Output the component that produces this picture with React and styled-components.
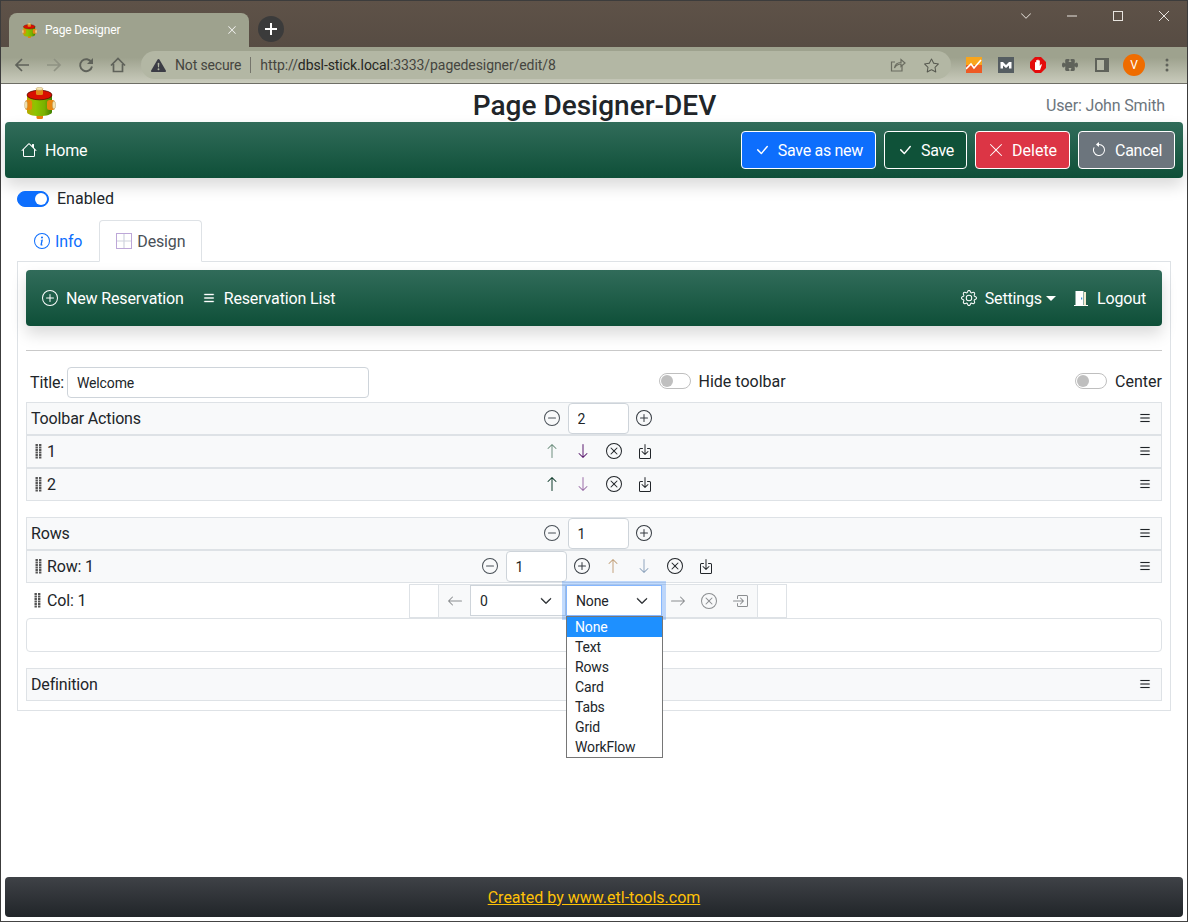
import React from "react";
import styled, { createGlobalStyle } from "styled-components";
import {
  BsHouse, BsCheckLg, BsXLg, BsArrowCounterclockwise, BsInfoCircle,
  BsPlusCircle, BsDashCircle, BsList, BsGear, BsArrowUp, BsArrowDown,
  BsArrowLeft, BsArrowRight, BsXCircle, BsBoxArrowInDown, BsBoxArrowInRight, BsChevronDown,
  BsStar, BsPuzzleFill, BsExclamationTriangleFill,
} from "react-icons/bs";

const GlobalStyle = createGlobalStyle`
  html, body { margin: 0; padding: 0; background: #fff; }
  body { font-family: Roboto, "Liberation Sans", sans-serif; font-size: 16px; color: #212529; letter-spacing: -.15px; }
  * { box-sizing: border-box; }
`;

const Frame = styled.div`
  width: 1188px;
  height: 922px;
  border: 1px solid #3c3c3c;
  border-bottom-color: #444;
  display: flex;
  flex-direction: column;
  overflow: hidden;
  background: #fff;
`;

/* browser chrome */
const TabStrip = styled.div`
  height: 46px;
  flex: none;
  background: linear-gradient(#5e5248, #574c43);
  display: flex;
  align-items: flex-end;
  padding-left: 8px;
  gap: 9px;
`;

const BrowserTab = styled.div`
  width: 240px;
  height: 34px;
  background: #9ea28e;
  border-radius: 8px 8px 0 0;
  display: flex;
  align-items: center;
  padding: 0 12px 0 13px;
  color: #fff;
  font-size: 12px;
  gap: 8px;
  span { flex: 1; }
`;

const NewTab = styled.div`
  width: 26px;
  height: 26px;
  margin-bottom: 5px;
  border-radius: 50%;
  background: #3b3b3b;
  color: #fff;
  display: flex;
  align-items: center;
  justify-content: center;
`;

const WindowControls = styled.div`
  margin-left: auto;
  align-self: flex-start;
  display: flex;
  align-items: center;
  height: 30px;
  color: #e8e4df;
  gap: 34px;
  padding-right: 17px;
`;

const ToolbarStrip = styled.div`
  height: 37px;
  flex: none;
  background: linear-gradient(#9ea28e 30%, #c9cbbc 100%);
  border-bottom: 1px solid #6e6e66;
  display: flex;
  align-items: center;
  padding: 0 12px 0 13px;
  color: #5f625a;
`;

const NavIcons = styled.div`
  display: flex;
  align-items: center;
  gap: 16px;
  width: 127px;
  flex: none;
`;

const Omnibox = styled.div`
  width: 840px;
  height: 28px;
  border-radius: 14px;
  background: #b3b7a4;
  display: flex;
  align-items: center;
  padding: 0 12px 0 10px;
  font-size: 14px;
  color: #45453f;
  gap: 9px;
`;

const AddressDivider = styled.i`
  width: 1px;
  height: 16px;
  background: #75756c;
`;

const AddressText = styled.span`
  flex: 1;
  letter-spacing: -.08px;
  b { font-weight: 400; color: #26261f; }
`;

const ExtensionIcons = styled.div`
  display: flex;
  align-items: center;
  gap: 16px;
  margin-left: 15px;
`;

const Avatar = styled.div`
  width: 22px;
  height: 22px;
  margin: 0 -2px 0 -3px;
  border-radius: 50%;
  background: #ef6c00;
  color: #fff;
  font-size: 12px;
  line-height: 22px;
  text-align: center;
`;

/* page */
const Page = styled.div`
  flex: 1;
  min-height: 0;
  display: flex;
  flex-direction: column;
  padding: 0 4px 4px;
`;

const Header = styled.header`
  height: 38px;
  flex: none;
  display: grid;
  grid-template-columns: 1fr auto 1fr;
  align-items: center;
  padding: 0 18px 0 19px;
`;

const Title = styled.h1`
  margin: 6px 0 0;
  font-size: 28px;
  font-weight: 500;
  line-height: 32px;
  letter-spacing: 0;
  color: #212529;
`;

const UserName = styled.div`
  justify-self: end;
  color: #6c757d;
  margin-top: 4px;
`;

const NavBar = styled.nav`
  flex: none;
  height: ${p => p.$height}px;
  border-radius: 4px;
  background: linear-gradient(#316c5a, #0e4f38);
  box-shadow: 0 8px 16px rgba(0, 0, 0, .15);
  display: flex;
  align-items: center;
  color: #fff;
  padding: 0 16px;
`;

const NavLink = styled.a`
  display: inline-flex;
  align-items: center;
  gap: 8px;
  color: #fff;
  margin-right: ${p => p.$gap || 0}px;
`;

const Spacer = styled.div`
  flex: 1;
`;

const ActionButton = styled.button`
  height: 38px;
  margin-left: 8px;
  padding: 0 12px;
  border: 1px solid #fff;
  border-radius: 4px;
  background: ${p => p.$bg};
  color: #fff;
  font: inherit;
  letter-spacing: ${p => p.$spacing || "-.3px"};
  display: inline-flex;
  align-items: center;
  gap: 8px;
`;

const SaveButtons = styled.div`
  display: flex;
  margin-right: -8px;
`;

const Caret = styled.i`
  width: 0;
  height: 0;
  margin-left: -4px;
  border-left: 5px solid transparent;
  border-right: 5px solid transparent;
  border-top: 5px solid #fff;
`;

const SwitchRow = styled.label`
  display: inline-flex;
  align-items: center;
  gap: 8px;
  letter-spacing: 0;
  margin-bottom: ${p => p.$lift || 0}px;
`;

const Track = styled.span`
  position: relative;
  width: 32px;
  height: 16px;
  border-radius: 8px;
  background: ${p => (p.$on ? "#0d6efd" : "#fff")};
  border: 1px solid ${p => (p.$on ? "#0d6efd" : "#bfbfbf")};
  &::after {
    content: "";
    position: absolute;
    top: 1px;
    left: ${p => (p.$on ? "17px" : "1px")};
    width: 12px;
    height: 12px;
    border-radius: 50%;
    background: ${p => (p.$on ? "#fff" : "#bfbfbf")};
  }
`;

const EnabledRow = styled.div`
  flex: none;
  padding: 11px 0 0 12px;
  height: 42px;
`;

const Tabs = styled.div`
  flex: none;
  display: flex;
  height: 42px;
  padding-left: 12px;
  position: relative;
  z-index: 1;
`;

const TabItem = styled.div`
  display: flex;
  align-items: center;
  gap: 5px;
  padding: 0 16px;
  height: 42px;
  border: 1px solid ${p => (p.$active ? "#dee2e6" : "transparent")};
  border-bottom-color: ${p => (p.$active ? "#fff" : "transparent")};
  border-radius: 4px 4px 0 0;
  background: ${p => (p.$active ? "#fff" : "transparent")};
  color: ${p => (p.$active ? "#495057" : "#0d6efd")};
`;

const TabPanel = styled.section`
  flex: none;
  margin: -1px 12px 0 12px;
  height: 450px;
  border: 1px solid #dee2e6;
  padding: 8px;
  display: flex;
  flex-direction: column;
`;

const Rule = styled.hr`
  flex: none;
  width: 100%;
  margin: 24px 0 16px;
  border: 0;
  border-top: 1px solid #c9c9c9;
`;

const FieldRow = styled.div`
  flex: none;
  display: flex;
  justify-content: space-between;
  align-items: center;
  height: 31px;
  margin-bottom: 4px;
  padding-left: 4px;
`;

const TitleField = styled.div`
  display: flex;
  align-items: center;
  gap: 3px;
`;

const TextInput = styled.input`
  width: ${p => p.$width}px;
  height: 31px;
  border: 1px solid #ced4da;
  border-radius: 4px;
  background: #fff;
  padding: 0 9px;
  font: inherit;
  font-size: 14px;
  letter-spacing: inherit;
  color: #212529;
  flex: none;
`;

const BarGroup = styled.div`
  flex: none;
  margin-bottom: ${p => p.$gap || 0}px;
`;

const Bar = styled.div`
  height: 33px;
  display: grid;
  grid-template-columns: 1fr auto 1fr;
  align-items: center;
  background: #f8f9fa;
  border: 1px solid #dee2e6;
  padding-left: 8px;
`;

const BarLabel = styled.div`
  display: flex;
  align-items: center;
  gap: ${p => p.$gap || 5}px;
  margin-left: ${p => (p.$flush ? "-4px" : "0")};
`;

const BarCenter = styled.div`
  display: flex;
  align-items: center;
  & > span { padding-bottom: 2px; }
`;

const BarEnd = styled.div`
  display: flex;
  justify-content: flex-end;
  padding: 0 9px 2px 0;
`;

const IconCell = styled.span`
  width: 31px;
  height: 31px;
  flex: none;
  display: flex;
  align-items: center;
  justify-content: center;
  color: ${p => p.$color || "#212529"};
  opacity: ${p => (p.$faded ? 0.5 : 1)};
`;

const ColRow = styled.div`
  height: 35px;
  display: grid;
  grid-template-columns: 1fr auto 1fr;
  align-items: center;
  padding-left: 8px;
`;

const ColFrame = styled.div`
  height: 34px;
  border: 1px solid #dee2e6;
  padding: 0 28px;
  display: flex;
`;

const ColTools = styled.div`
  display: flex;
  align-items: center;
  background: #f8f9fa;
  border-left: 1px solid #dee2e6;
  border-right: 1px solid #dee2e6;
  padding-right: 2px;
`;

const SelectBox = styled.div`
  position: relative;
  width: 96px;
  height: 31px;
  background: #fff;
  border: 1px solid ${p => (p.$focus ? "#86b7fe" : "#ced4da")};
  box-shadow: ${p => (p.$focus ? "0 0 0 4px rgba(13,110,253,.25)" : "none")};
  display: flex;
  align-items: center;
  justify-content: space-between;
  padding: 0 13px 0 9px;
  font-size: 14px;
  z-index: ${p => (p.$focus ? 2 : 0)};
`;

const OptionList = styled.ul`
  position: absolute;
  top: 30px;
  left: -1px;
  width: 97px;
  margin: 0;
  padding: 0;
  list-style: none;
  background: #fff;
  border: 1px solid #767676;
  z-index: 5;
`;

const OptionItem = styled.li`
  height: 20px;
  line-height: 20px;
  padding-left: 8px;
  font-size: 14px;
  background: ${p => (p.$active ? "#1e90ff" : "#fff")};
  color: ${p => (p.$active ? "#fff" : "#212529")};
`;

const EmptyBox = styled.div`
  flex: none;
  height: 34px;
  border: 1px solid #dee2e6;
  border-radius: 4px;
  margin-bottom: 16px;
`;

const Footer = styled.footer`
  margin-top: auto;
  flex: none;
  height: 40px;
  border-radius: 4px;
  background: linear-gradient(#3f4247, #212529);
  display: flex;
  align-items: center;
  justify-content: center;
  letter-spacing: 0;
  a { color: #ffc107; text-decoration: underline; }
`;

const Logo = ({ size = 32, id = "logoBody" }) => (
  <svg width={size} height={size} viewBox="0 0 32 32">
    <defs>
      <linearGradient id={id} x1="0" x2="1">
        <stop offset="0" stopColor="#b9a800" />
        <stop offset=".35" stopColor="#8cc400" />
        <stop offset=".7" stopColor="#7ab000" />
        <stop offset="1" stopColor="#3f7f00" />
      </linearGradient>
    </defs>
    <rect x="12.500" y="26" width="6.500" height="6" rx="1.500" fill="#e8820c" />
    <path d="M3 8v17c0 2.500 5.500 4 12.500 4S28 27.500 28 25V8z" fill={`url(#${id})`} />
    <ellipse cx="15.500" cy="8" rx="12.500" ry="4.800" fill="#d90f00" stroke="#4a0a00" strokeWidth=".7" />
    <rect x="12" y="1" width="7" height="7" rx="1.500" fill="#e08a18" />
    <ellipse cx="15.500" cy="1.800" rx="3.500" ry="1.500" fill="#f6e6b0" stroke="#a88a50" strokeWidth=".4" />
    <rect x="1" y="13" width="7" height="10" rx="2.500" fill="#e8860f" />
    <ellipse cx="2" cy="18" rx="1.400" ry="4" fill="#f6e6b0" stroke="#a88a50" strokeWidth=".4" />
    <rect x="23" y="13" width="8" height="10" rx="2.500" fill="#e8860f" />
    <ellipse cx="30" cy="18" rx="1.600" ry="4" fill="#f6e6b0" stroke="#a88a50" strokeWidth=".4" />
  </svg>
);

const Grip = () => (
  <svg width="7" height="15" viewBox="0 0 7 15" fill="#555">
    {[0, 2.5, 5, 7.5, 10, 12.5].map(y => (
      <React.Fragment key={y}>
        <rect x="0.500" y={y} width="2.400" height="2" />
        <rect x="4" y={y} width="2.400" height="2" />
      </React.Fragment>
    ))}
  </svg>
);

const DesignIcon = () => (
  <svg width="16" height="16" viewBox="0 0 16 16" fill="none">
    <rect x=".5" y=".5" width="15" height="15" stroke="#7a4fb0" strokeDasharray="1 1" />
    <path d="M8 1v14M1 8h14" stroke="#d0d4de" strokeWidth="1.200" />
  </svg>
);

const DoorIcon = () => (
  <svg width="16" height="16" viewBox="0 0 16 16">
    <path d="M1 15.500h14" stroke="#fff" />
    <rect x="2.500" y="1" width="8" height="14.500" fill="#fff" />
    <rect x="11" y="2" width="2" height="13.500" fill="#f3e9cf" />
    <rect x="8" y="7.500" width="1.200" height="2" fill="#3f8fd8" />
  </svg>
);

const BackIcon = ({ color }) => (
  <svg width="16" height="16" viewBox="0 0 16 16" fill="none" stroke={color} strokeWidth="1.700">
    <path d="M15 8H2M8 2L2 8l6 6" />
  </svg>
);

const ForwardIcon = ({ color }) => (
  <svg width="16" height="16" viewBox="0 0 16 16" fill="none" stroke={color} strokeWidth="1.700">
    <path d="M1 8h13M8 2l6 6-6 6" />
  </svg>
);

const ReloadIcon = ({ color }) => (
  <svg width="16" height="16" viewBox="0 0 16 16" fill="none">
    <path d="M13.500 5.500A6 6 0 1 0 14 9.500" stroke={color} strokeWidth="1.900" />
    <path d="M15 1v6H9z" fill={color} />
  </svg>
);

const HomeIcon = ({ color }) => (
  <svg width="16" height="16" viewBox="0 0 16 16" fill="none" stroke={color} strokeWidth="1.700">
    <path d="M1 8.500L8 1.500l7 7M3.500 7v7.500h9V7" />
  </svg>
);

const ShareIcon = () => (
  <svg width="16" height="16" viewBox="0 0 16 16" fill="none" stroke="#6a6c60" strokeWidth="1.200">
    <path d="M12 9v5H1.500V5H5" />
    <path d="M4.500 11c.5-3.500 3-5.500 6.500-5.500V2.500L15 6l-4 3.500V7c-3 0-5 1.500-6.500 4z" />
  </svg>
);

const ChartExtension = () => (
  <svg width="16" height="16" viewBox="0 0 16 16">
    <rect width="16" height="8" fill="#f8a51d" />
    <rect y="8" width="16" height="8" fill="#ee5a24" />
    <path d="M0 12l5-5 3 4 7-8" fill="none" stroke="#fff" strokeWidth="1.600" />
  </svg>
);

const MailExtension = () => (
  <svg width="16" height="16" viewBox="0 0 16 16">
    <rect width="16" height="16" fill="#555d61" />
    <path d="M2.500 11.500V5H5l3 3 3-3h2.500v6.500h-2.500V8.500L8 11 5 8.500v3z" fill="#fff" />
  </svg>
);

const BlockExtension = () => (
  <svg width="16" height="16" viewBox="0 0 16 16">
    <path d="M5 0h6l5 5v6l-5 5H5l-5-5V5z" fill="#e40b0b" />
    <path d="M5 13V5.500c0-.8 1.200-.8 1.200 0V3.500c0-.8 1.200-.8 1.200 0V3c0-.8 1.200-.8 1.200 0v.8c0-.8 1.200-.8 1.200 0V9l1-1.500c.5-.7 1.300-.2 1 .5L10 13z" fill="#fff" />
  </svg>
);

const SidePanelIcon = () => (
  <svg width="16" height="14" viewBox="0 0 16 14">
    <rect x="1" width="14" height="14" fill="#5f625a" />
    <rect x="3" y="2" width="7" height="10" fill="#b5b8a6" />
  </svg>
);

const MenuDots = () => (
  <svg width="16" height="16" viewBox="0 0 16 16" fill="#5f625a">
    <circle cx="8" cy="3" r="1.500" />
    <circle cx="8" cy="8" r="1.500" />
    <circle cx="8" cy="13" r="1.500" />
  </svg>
);

const PlusMark = () => (
  <svg width="14" height="14" viewBox="0 0 14 14" stroke="#fff" strokeWidth="2"><path d="M7 1v12M1 7h12" /></svg>
);
const MinimizeIcon = () => (
  <svg width="12" height="12" viewBox="0 0 12 12" stroke="currentColor"><path d="M1 6h10" /></svg>
);
const MaximizeIcon = () => (
  <svg width="12" height="12" viewBox="0 0 12 12" fill="none" stroke="currentColor"><rect x="1.500" y="1.500" width="9" height="9" /></svg>
);
const CloseIcon = () => (
  <svg width="12" height="12" viewBox="0 0 12 12" stroke="currentColor"><path d="M1 1l10 10M11 1L1 11" /></svg>
);

const Stepper = ({ value }) => (
  <>
    <IconCell $color="#495057"><BsDashCircle size={16} /></IconCell>
    <TextInput $width={61} defaultValue={value} />
    <IconCell $color="#343a40"><BsPlusCircle size={16} /></IconCell>
  </>
);

const RowMenu = () => (
  <BarEnd><BsList size={14} strokeWidth={.15} /></BarEnd>
);

const options = ["None", "Text", "Rows", "Card", "Tabs", "Grid", "WorkFlow"];

const App = () => (
  <Frame>
    <GlobalStyle />
    <TabStrip>
      <BrowserTab>
        <Logo size={15} id="favBody" />
        <span>Page Designer</span>
        <BsXLg size={10} />
      </BrowserTab>
      <NewTab><PlusMark /></NewTab>
      <WindowControls>
        <BsChevronDown size={12} />
        <MinimizeIcon />
        <MaximizeIcon />
        <CloseIcon />
      </WindowControls>
    </TabStrip>
    <ToolbarStrip>
      <NavIcons>
        <BackIcon color="#5f625a" />
        <ForwardIcon color="#8f9283" />
        <ReloadIcon color="#5f625a" />
        <HomeIcon color="#5f625a" />
      </NavIcons>
      <Omnibox>
        <BsExclamationTriangleFill size={15} color="#3b3c45" />
        <span>Not secure</span>
        <AddressDivider />
        <AddressText>http://<b>dbsl-stick.local</b>:3333/pagedesigner/edit/8</AddressText>
        <ShareIcon />
        <span />
        <BsStar size={15} color="#55574e" />
      </Omnibox>
      <ExtensionIcons>
        <ChartExtension />
        <MailExtension />
        <BlockExtension />
        <BsPuzzleFill size={16} color="#5f625a" />
        <SidePanelIcon />
        <Avatar>V</Avatar>
        <MenuDots />
      </ExtensionIcons>
    </ToolbarStrip>
    <Page>
      <Header>
        <Logo />
        <Title>Page Designer-DEV</Title>
        <UserName>User: John Smith</UserName>
      </Header>
      <NavBar $height={56}>
        <NavLink><BsHouse size={16} />Home</NavLink>
        <Spacer />
        <SaveButtons>
          <ActionButton $bg="#0d6efd"><BsCheckLg size={16} />Save as new</ActionButton>
          <ActionButton $bg="#0f5239"><BsCheckLg size={16} />Save</ActionButton>
          <ActionButton $bg="#dc3545" $spacing="0"><BsXLg size={16} />Delete</ActionButton>
          <ActionButton $bg="#6c757d"><BsArrowCounterclockwise size={16} />Cancel</ActionButton>
        </SaveButtons>
      </NavBar>
      <EnabledRow>
        <SwitchRow><Track $on />Enabled</SwitchRow>
      </EnabledRow>
      <Tabs>
        <TabItem><BsInfoCircle size={16} />Info</TabItem>
        <TabItem $active><DesignIcon />Design</TabItem>
      </Tabs>
      <TabPanel>
        <NavBar $height={56}>
          <NavLink $gap={18}><BsPlusCircle size={16} />New Reservation</NavLink>
          <NavLink><BsList size={14} strokeWidth={.5} />Reservation List</NavLink>
          <Spacer />
          <NavLink $gap={17}><BsGear size={16} />Settings<Caret /></NavLink>
          <NavLink><DoorIcon />Logout</NavLink>
        </NavBar>
        <Rule />
        <FieldRow>
          <TitleField>Title:<TextInput $width={302} defaultValue="Welcome" /></TitleField>
          <SwitchRow $lift={3}><Track />Hide toolbar</SwitchRow>
          <SwitchRow $lift={3}><Track />Center</SwitchRow>
        </FieldRow>
        <BarGroup $gap={16}>
          <Bar>
            <BarLabel $flush>Toolbar Actions</BarLabel>
            <BarCenter><Stepper value="2" /></BarCenter>
            <RowMenu />
          </Bar>
          <Bar>
            <BarLabel><Grip />1</BarLabel>
            <BarCenter>
              <IconCell $color="#6f8f7f"><BsArrowUp size={16} /></IconCell>
              <IconCell $color="#5a1a6e"><BsArrowDown size={16} /></IconCell>
              <IconCell><BsXCircle size={16} /></IconCell>
              <IconCell><BsBoxArrowInDown size={16} /></IconCell>
            </BarCenter>
            <RowMenu />
          </Bar>
          <Bar>
            <BarLabel><Grip />2</BarLabel>
            <BarCenter>
              <IconCell $color="#0e3a2a"><BsArrowUp size={16} /></IconCell>
              <IconCell $color="#9b6fa8"><BsArrowDown size={16} /></IconCell>
              <IconCell><BsXCircle size={16} /></IconCell>
              <IconCell><BsBoxArrowInDown size={16} /></IconCell>
            </BarCenter>
            <RowMenu />
          </Bar>
        </BarGroup>
        <BarGroup>
          <Bar>
            <BarLabel $flush>Rows</BarLabel>
            <BarCenter><Stepper value="1" /></BarCenter>
            <RowMenu />
          </Bar>
          <Bar>
            <BarLabel><Grip />Row: 1</BarLabel>
            <BarCenter>
              <Stepper value="1" />
              <IconCell $color="#c4a27c"><BsArrowUp size={16} /></IconCell>
              <IconCell $color="#8fa5bd"><BsArrowDown size={16} /></IconCell>
              <IconCell><BsXCircle size={16} /></IconCell>
              <IconCell><BsBoxArrowInDown size={16} /></IconCell>
            </BarCenter>
            <RowMenu />
          </Bar>
          <ColRow>
            <BarLabel $gap={6}><Grip />Col: 1</BarLabel>
            <ColFrame>
              <ColTools>
                <IconCell $faded><BsArrowLeft size={16} /></IconCell>
                <SelectBox>0<BsChevronDown size={12} strokeWidth={1} /></SelectBox>
                <SelectBox $focus>
                  None<BsChevronDown size={12} strokeWidth={1} />
                  <OptionList>
                    {options.map((o, i) => <OptionItem key={o} $active={i === 0}>{o}</OptionItem>)}
                  </OptionList>
                </SelectBox>
                <IconCell $faded><BsArrowRight size={16} /></IconCell>
                <IconCell $faded><BsXCircle size={16} /></IconCell>
                <IconCell $faded><BsBoxArrowInRight size={16} /></IconCell>
              </ColTools>
            </ColFrame>
            <span />
          </ColRow>
        </BarGroup>
        <EmptyBox />
        <Bar>
          <BarLabel $flush>Definition</BarLabel>
          <span />
          <RowMenu />
        </Bar>
      </TabPanel>
      <Footer><a>Created by www.etl-tools.com</a></Footer>
    </Page>
  </Frame>
);

export default App;
